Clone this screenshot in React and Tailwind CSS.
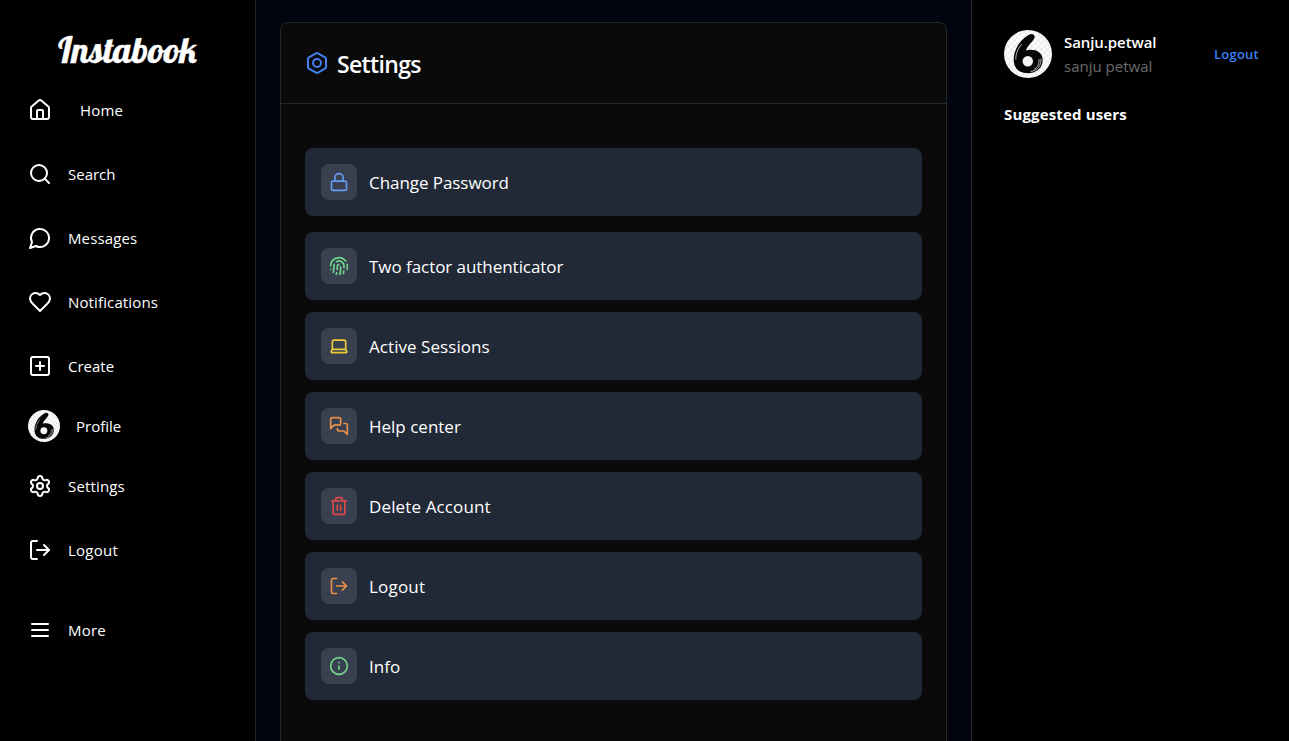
import React from 'react';
import { House, Search, SquarePlus, Settings, Bolt, Lock, Fingerprint, Trash2, Info } from 'lucide-react';

function Icon({ size = 24, children }) {
  return (
    <svg width={size} height={size} viewBox="0 0 24 24" fill="none" stroke="currentColor" strokeWidth="2" strokeLinecap="round" strokeLinejoin="round">
      {children}
    </svg>
  );
}
const MessageCircle = () => <Icon><path d="M7.9 20A9 9 0 1 0 4 16.1L2 22Z" /></Icon>;
const Heart = () => (
  <Icon><path d="M19 14c1.49-1.46 3-3.21 3-5.5A5.5 5.5 0 0 0 16.5 3c-1.76 0-3 .5-4.5 2-1.5-1.5-2.74-2-4.5-2A5.5 5.5 0 0 0 2 8.5c0 2.3 1.5 4.05 3 5.5l7 7Z" /></Icon>
);
const Menu = () => <Icon><path d="M4 12h16M4 6h16M4 18h16" /></Icon>;
const SignOut = ({ size = 24 }) => (
  <Icon size={size}><path d="M9 21H5a2 2 0 0 1-2-2V5a2 2 0 0 1 2-2h4" /><path d="m16 17 5-5-5-5" /><path d="M21 12H9" /></Icon>
);
const Laptop = ({ size }) => (
  <Icon size={size}><path d="M20 16V7a2 2 0 0 0-2-2H6a2 2 0 0 0-2 2v9m16 0H4m16 0 1.28 2.55a1 1 0 0 1-.9 1.45H3.62a1 1 0 0 1-.9-1.45L4 16" /></Icon>
);
const Messages = ({ size }) => (
  <Icon size={size}>
    <path d="M14 9a2 2 0 0 1-2 2H6l-4 4V4a2 2 0 0 1 2-2h8a2 2 0 0 1 2 2z" />
    <path d="M18 9h2a2 2 0 0 1 2 2v11l-4-4h-6a2 2 0 0 1-2-2v-1" />
  </Icon>
);

function Avatar({ size }) {
  return (
    <svg width={size} height={size} viewBox="0 0 48 48" className="shrink-0 rounded-full">
      <defs>
        <pattern id="checks" width="6" height="6" patternUnits="userSpaceOnUse">
          <rect width="6" height="6" fill="#fdfdfd" />
          <rect width="3" height="3" fill="#eeeeee" />
          <rect x="3" y="3" width="3" height="3" fill="#eeeeee" />
        </pattern>
      </defs>
      <rect width="48" height="48" fill="url(#checks)" />
      <path fill="#050505" d="M25 4.800C28 3 31.500 4.500 30.500 7.800C29 12 23.500 15 22 20.500C29 18.500 38.700 21 38.700 30C38.700 38.500 31.500 43.300 23.500 43.300C14.500 43.300 9.700 38 9.700 29.500C9.700 20 15.500 10 25 4.800Z" />
      <ellipse cx="23.800" cy="31.200" rx="5.200" ry="5.200" fill="#f4f4f4" />
      <path fill="none" stroke="#e4e4e4" strokeWidth="0.8" strokeLinecap="round" d="M17.500 14.500C13.500 19 11.800 24 11.800 29M37 29C37.500 35.500 33.500 40.500 27 41.500M35 29.500C35.500 34 33.500 37.500 30.500 39" />
    </svg>
  );
}

const nav = [
  { icon: <House size={24} />, label: 'Home', cls: 'h-16 gap-7 tracking-[0.2px]' },
  { icon: <Search size={24} />, label: 'Search', cls: 'h-16 gap-4' },
  { icon: <MessageCircle />, label: 'Messages', cls: 'h-16 gap-4 tracking-[0.12px]' },
  { icon: <Heart />, label: 'Notifications', cls: 'h-16 gap-4 tracking-[0.13px]' },
  { icon: <SquarePlus size={24} />, label: 'Create', cls: 'h-16 gap-4' },
  { icon: <Avatar size={32} />, label: 'Profile', cls: 'h-14 gap-4' },
  { icon: <Settings size={24} />, label: 'Settings', cls: 'h-16 gap-4 tracking-[0.15px]' },
  { icon: <SignOut />, label: 'Logout', cls: 'h-16 gap-4 tracking-[0.25px]' },
  { icon: <Menu />, label: 'More', cls: 'mt-4 h-16 gap-4 tracking-[0.2px]' },
];

const items = [
  { icon: <Lock size={20} />, label: 'Change Password', cls: 'mb-4 text-[#659bf3] tracking-[-0.06px]' },
  { icon: <Fingerprint size={20} />, label: 'Two factor authenticator', cls: 'mb-3 text-[#6fd68a] tracking-[-0.05px]' },
  { icon: <Laptop size={20} />, label: 'Active Sessions', cls: 'mb-3 text-[#f0c93c] tracking-[0.06px]' },
  { icon: <Messages size={20} />, label: 'Help center', cls: 'mb-3 text-[#e9914a]' },
  { icon: <Trash2 size={20} />, label: 'Delete Account', cls: 'mb-3 text-[#dc4a48] tracking-[0.13px]' },
  { icon: <SignOut size={20} />, label: 'Logout', cls: 'mb-3 text-[#e9914a] tracking-[0.2px]' },
  { icon: <Info size={20} />, label: 'Info', cls: 'text-[#6fd68a]' },
];

export default function App() {
  return (
    <div className="flex h-[741px] w-full overflow-hidden bg-[#02040f] font-['Open_Sans',sans-serif] text-white">
      <aside className="flex w-64 shrink-0 flex-col border-r border-[#27272a] bg-black">
        <h1 className="flex h-[78px] items-end justify-center pb-2 font-['Lobster','Liberation_Serif',serif] text-4xl [-webkit-text-stroke:0.4px_white]">Instabook</h1>
        <nav className="flex flex-col px-7">
          {nav.map((n) => (
            <div key={n.label} className={`flex items-center text-[15px] ${n.cls}`}>
              {n.icon}
              <span>{n.label}</span>
            </div>
          ))}
        </nav>
      </aside>
      <main className="flex min-w-0 flex-1 px-6 pt-[22px]">
        <section className="h-[760px] w-full rounded-lg border border-[#27272a] bg-[#0a0a0a]">
          <header className="flex h-[81px] items-center gap-2 border-b border-[#222831] px-6">
            <Bolt size={24} className="text-[#4580f0]" />
            <h2 className="pt-0.5 text-[23px] font-semibold tracking-[-0.65px]">Settings</h2>
          </header>
          <div className="px-6 pt-11">
            {items.map((it) => (
              <div key={it.label} className={`flex h-[68px] items-center gap-3 rounded-lg bg-[#212936] px-4 ${it.cls}`}>
                <div className="rounded-lg bg-[#394050] p-2">{it.icon}</div>
                <span className="pt-0.5 text-[17px] text-white">{it.label}</span>
              </div>
            ))}
          </div>
        </section>
      </main>
      <aside className="w-[318px] shrink-0 border-l border-[#27272a] bg-black pl-8 pr-[30px] pt-[30px]">
        <div className="flex items-center gap-3">
          <Avatar size={48} />
          <div className="flex-1 leading-6">
            <p className="text-[15px] font-semibold tracking-[-0.08px]">Sanju.petwal</p>
            <p className="text-[15px] text-[#6b6b6b]">sanju petwal</p>
          </div>
          <span className="pt-0.5 text-[13px] font-semibold tracking-[0.25px] text-[#3b82f6]">Logout</span>
        </div>
        <h3 className="mt-6 text-[15px] font-bold leading-6 tracking-[0.15px]">Suggested users</h3>
      </aside>
    </div>
  );
}
